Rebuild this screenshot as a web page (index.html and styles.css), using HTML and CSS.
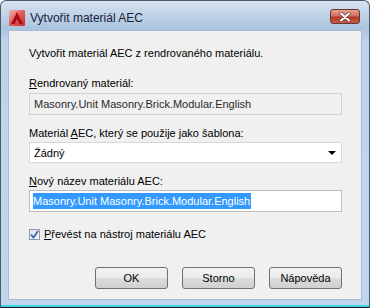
FILE: index.html
```html
<!DOCTYPE html>
<html lang="cs">
<head>
  <meta charset="UTF-8" />
  <title>Vytvořit materiál AEC</title>
  <link rel="stylesheet" href="styles.css">
</head>
<body>
  <div class="window">
    <div class="titlebar">
      <svg class="app-icon" width="16" height="16" viewBox="0 0 16 16">
        <defs>
          <linearGradient id="iconbg" x1="0" y1="0" x2="1" y2="1">
            <stop offset="0" stop-color="#f3b4b4"/>
            <stop offset="0.5" stop-color="#e25a5a"/>
            <stop offset="1" stop-color="#c42a2a"/>
          </linearGradient>
        </defs>
        <rect x="0" y="0" width="16" height="16" rx="1" fill="url(#iconbg)"/>
        <path d="M8 2 L14 14 L10.5 14 L8 9 L5.5 14 L2 14 Z" fill="#a50d12"/>
      </svg>
      <span class="title">Vytvořit materiál AEC</span>
      <button class="close" type="button">
        <svg width="14" height="10" viewBox="0 0 14 10">
          <path d="M3 1.5 L11 8.5 M11 1.5 L3 8.5" stroke="#6a3b3b" stroke-width="3.4" stroke-linecap="round"/>
          <path d="M3 1.5 L11 8.5 M11 1.5 L3 8.5" stroke="#ffffff" stroke-width="2" stroke-linecap="round"/>
        </svg>
      </button>
    </div>

    <div class="client">
      <p class="intro">Vytvořit materiál AEC z rendrovaného materiálu.</p>

      <div class="label first"><u>R</u>endrovaný materiál:</div>
      <div class="field readonly">Masonry.Unit Masonry.Brick.Modular.English</div>

      <div class="label">Materiál <u>A</u>EC, který se použije jako šablona:</div>
      <div class="field combo">
        <span>Žádný</span>
        <span class="arrow"></span>
      </div>

      <div class="label"><u>N</u>ový název materiálu AEC:</div>
      <div class="field edit"><span class="selected">Masonry.Unit Masonry.Brick.Modular.English</span></div>

      <div class="check-row">
        <span class="checkbox">
          <svg width="9" height="9" viewBox="0 0 9 9">
            <path d="M1 4.5 L3.5 7.5 L8 1" fill="none" stroke="#3c64b4" stroke-width="1.8"/>
          </svg>
        </span>
        <span><u>P</u>řevést na nástroj materiálu AEC</span>
      </div>

      <div class="buttons">
        <button class="btn" type="button">OK</button>
        <button class="btn" type="button">Storno</button>
        <button class="btn" type="button">Nápověda</button>
      </div>
    </div>
  </div>
</body>
</html>
```

FILE: styles.css
```css
* {
  margin: 0;
  padding: 0;
  box-sizing: border-box;
}

body {
  background: #ffffff;
  font-family: "Liberation Sans", Arial, sans-serif;
  font-size: 11px;
  color: #000000;
}

.window {
  width: 370px;
  height: 308px;
  border: 1px solid #4d5866;
  border-bottom: 1px solid #1a1a1a;
  border-radius: 6px 6px 0 0;
  background: linear-gradient(180deg, #d6e3f1 0px, #aac3de 28px, #bcd4ec 40px, #bfd7ee 100%);
  box-shadow: inset 0 -2px 0 #3fd5e8;
  padding: 0 7px;
}

.titlebar {
  height: 29px;
  display: flex;
  align-items: center;
  padding-top: 4px;
}

.app-icon {
  margin: 0 5px 0 1px;
}

.title {
  color: #1b1b38;
  font-size: 12px;
}

.close {
  margin-left: auto;
  margin-right: 2px;
  width: 30px;
  height: 15px;
  border: 1px solid #6b3535;
  border-radius: 3px;
  background: linear-gradient(180deg, #e6a390 0%, #d0705c 45%, #b43a26 55%, #c75a42 100%);
  display: flex;
  align-items: center;
  justify-content: center;
  margin-top: -2px;
}

.client {
  height: 270px;
  background: #f0f0f0;
  border: 1px solid #a8bcd2;
  padding: 15px 19px 0 20px;
}

.intro {
  line-height: 15px;
}

.label {
  line-height: 15px;
  margin-top: 11px;
  margin-bottom: 1px;
}

.label.first {
  margin-top: 15px;
  margin-bottom: 2px;
}

.field {
  height: 22px;
  border: 1px solid #c5c5c5;
  background: #ffffff;
  display: flex;
  align-items: center;
  padding-left: 4px;
}

.field.readonly {
  background: #f0f0f0;
  border-color: #d0d0d0;
  color: #2a2a2a;
}

.field.combo {
  height: 21px;
  border-color: #d8d8d8;
}

.arrow {
  margin-left: auto;
  margin-right: 5px;
  border-left: 4px solid transparent;
  border-right: 4px solid transparent;
  border-top: 4px solid #000000;
}

.field.edit {
  border-color: #bdbdbd;
  padding-left: 3px;
}

.selected {
  background: #3399ff;
  color: #ffffff;
  line-height: 16px;
  padding-right: 1px;
}

.check-row {
  display: flex;
  align-items: center;
  gap: 4px;
  margin-top: 15px;
  line-height: 15px;
}

.checkbox {
  width: 11px;
  height: 11px;
  border: 1px solid #8e9aa8;
  background: linear-gradient(135deg, #dfe4ea, #f6f7f9);
  display: flex;
  align-items: center;
  justify-content: center;
}

.buttons {
  display: flex;
  justify-content: flex-end;
  gap: 14px;
  margin-top: 25px;
}

.btn {
  width: 73px;
  height: 22px;
  border: 1px solid #707070;
  border-radius: 3px;
  background: linear-gradient(180deg, #f2f2f2 0%, #ebebeb 50%, #dddddd 51%, #cfcfcf 100%);
  font-family: inherit;
  font-size: 11px;
  color: #000000;
}
```
